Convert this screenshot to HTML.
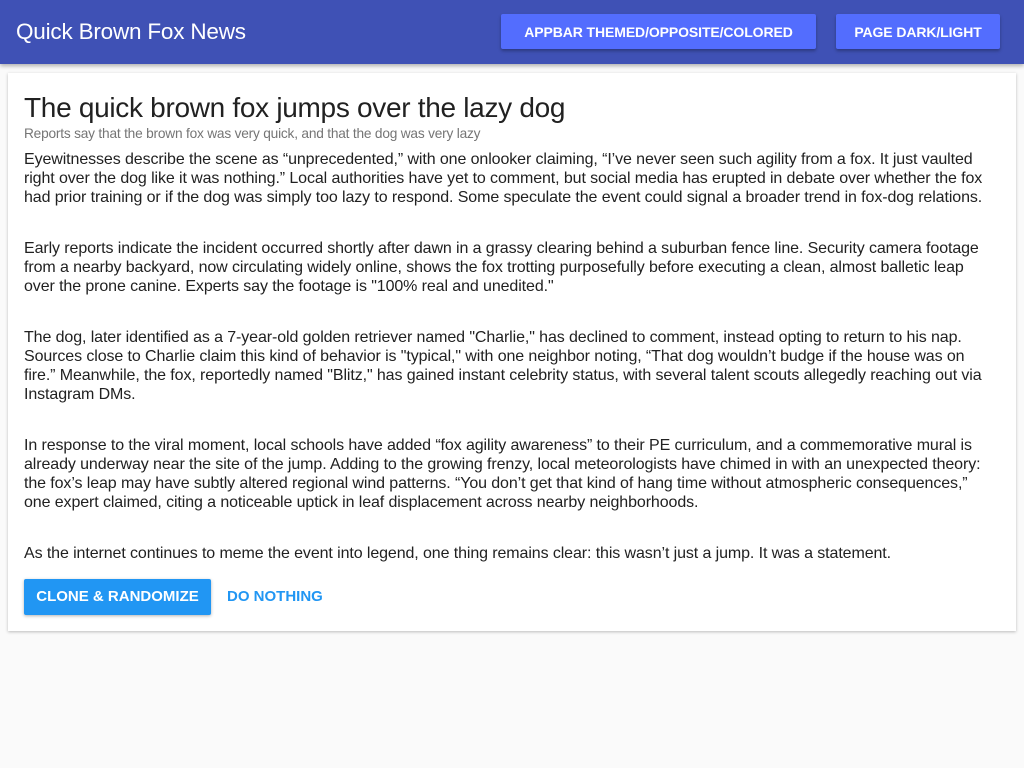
<!DOCTYPE html>
<html><head><style>
body{margin:0;background:#fafafa;font-family:"Liberation Sans",sans-serif;width:1024px;height:768px;overflow:hidden;position:relative}
.bar{position:absolute;left:0;top:0;width:1024px;height:64px;background:#3f51b5;box-shadow:0 2px 4px rgba(0,0,0,.3)}
.bar .t{position:absolute;left:16px;top:19px;color:#fff;font-size:22.5px;letter-spacing:-0.2px}
.btn{position:absolute;top:14px;height:35px;background:#536dfe;color:#fff;font-size:14px;font-weight:bold;line-height:36px;text-align:center;border-radius:2px;box-shadow:0 2px 3px rgba(0,0,0,.3);letter-spacing:-0.1px}
.card{position:absolute;left:8px;top:73px;width:1008px;height:558px;background:#fff;box-shadow:0 1px 3px rgba(0,0,0,.25)}
h1{position:absolute;left:16px;top:19px;margin:0;font-size:28px;font-weight:normal;color:#212121;letter-spacing:-0.3px}
.sub{position:absolute;left:16px;top:53px;font-size:13.7px;color:#757575;letter-spacing:-0.2px}
.p{position:absolute;left:16px;font-size:16px;line-height:19px;color:#212121;white-space:nowrap;letter-spacing:-0.1px}
.b1{position:absolute;left:16px;top:506px;width:187px;height:36px;background:#2196f3;color:#fff;font-size:15px;font-weight:bold;line-height:36px;text-align:center;border-radius:2px;box-shadow:0 1px 3px rgba(0,0,0,.3)}
.b2{position:absolute;left:219px;top:506px;height:36px;color:#2196f3;font-size:15px;font-weight:bold;line-height:36px}
</style></head><body>
<div class="bar"><div class="t">Quick Brown Fox News</div>
<div class="btn" style="left:501px;width:315px">APPBAR THEMED/OPPOSITE/COLORED</div>
<div class="btn" style="left:836px;width:164px">PAGE DARK/LIGHT</div></div>
<div class="card">
<h1>The quick brown fox jumps over the lazy dog</h1>
<div class="sub">Reports say that the brown fox was very quick, and that the dog was very lazy</div>
<div class="p" style="top:77px">Eyewitnesses describe the scene as “unprecedented,” with one onlooker claiming, “I’ve never seen such agility from a fox. It just vaulted<br>right over the dog like it was nothing.” Local authorities have yet to comment, but social media has erupted in debate over whether the fox<br>had prior training or if the dog was simply too lazy to respond. Some speculate the event could signal a broader trend in fox-dog relations.</div>
<div class="p" style="top:166px">Early reports indicate the incident occurred shortly after dawn in a grassy clearing behind a suburban fence line. Security camera footage<br>from a nearby backyard, now circulating widely online, shows the fox trotting purposefully before executing a clean, almost balletic leap<br>over the prone canine. Experts say the footage is "100% real and unedited."</div>
<div class="p" style="top:255px">The dog, later identified as a 7-year-old golden retriever named "Charlie," has declined to comment, instead opting to return to his nap.<br>Sources close to Charlie claim this kind of behavior is "typical," with one neighbor noting, “That dog wouldn’t budge if the house was on<br>fire.” Meanwhile, the fox, reportedly named "Blitz," has gained instant celebrity status, with several talent scouts allegedly reaching out via<br>Instagram DMs.</div>
<div class="p" style="top:363px">In response to the viral moment, local schools have added “fox agility awareness” to their PE curriculum, and a commemorative mural is<br>already underway near the site of the jump. Adding to the growing frenzy, local meteorologists have chimed in with an unexpected theory:<br>the fox’s leap may have subtly altered regional wind patterns. “You don’t get that kind of hang time without atmospheric consequences,”<br>one expert claimed, citing a noticeable uptick in leaf displacement across nearby neighborhoods.</div>
<div class="p" style="top:471px">As the internet continues to meme the event into legend, one thing remains clear: this wasn’t just a jump. It was a statement.</div>
<div class="b1">CLONE &amp; RANDOMIZE</div>
<div class="b2">DO NOTHING</div>
</div>
</body></html>
